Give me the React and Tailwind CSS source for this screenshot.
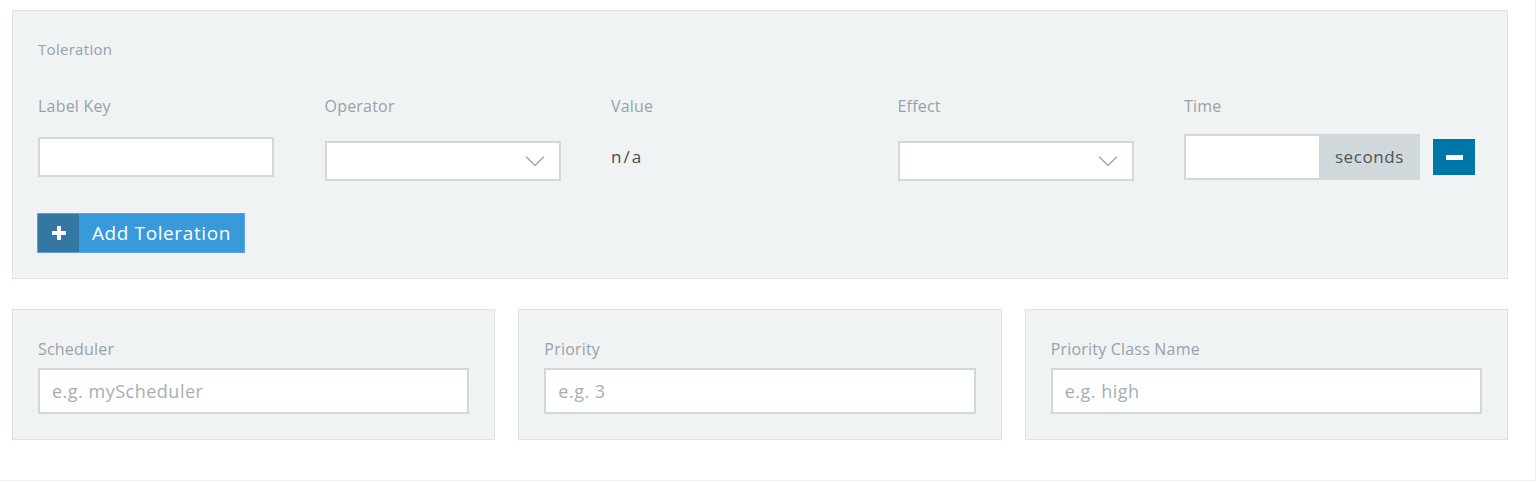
import React from 'react';

const font = { fontFamily: '"Open Sans", "Liberation Sans", sans-serif' };

const Chevron = () => (
  <svg width="20" height="11" viewBox="0 0 20 11" className="absolute right-[14px] top-1/2 -translate-y-1/2">
    <path d="M1 1 L10 10 L19 1" fill="none" stroke="#9ea7ac" strokeWidth="1.4" />
  </svg>
);

const SelectBox = () => (
  <div className="relative mt-[25px] h-[40px] w-[236px] bg-white border-2 border-[#d0d8db]">
    <Chevron />
  </div>
);

const Label = ({ children }) => (
  <div className="text-[16px] leading-[20px] tracking-[0.2px] text-[#98a1a7]">{children}</div>
);

const SmallPanel = ({ label, placeholder }) => (
  <div className="bg-[#f0f3f4] border border-[#dde3e6] h-[131px] px-[25px] pt-[29px]">
    <Label>{label}</Label>
    <input
      type="text"
      placeholder={placeholder}
      className="mt-[9px] w-full h-[46px] bg-white border-2 border-[#d0d8db] px-[12px] text-[18px] tracking-[0.5px] text-[#4a4a4a] placeholder:text-[#a6aeb3] outline-none"
      style={font}
    />
  </div>
);

export default function App() {
  return (
    <div className="w-[1536px] h-[481px] bg-white border-r border-b border-[#eff1f2] pt-[10px] pl-[12px] pr-[27px]" style={font}>
      {/* Toleration block */}
      <div className="bg-[#f0f3f4] border border-[#dde3e6] h-[269px] px-[25px] pt-[24px]">
        <div className="text-[15px] leading-[28px] tracking-[0.3px] text-[#98a1a7]">Toleration</div>

        <div className="mt-[33px] grid grid-cols-[236px_236px_236px_236px_auto] gap-x-[50.5px] items-start">
          <div className="flex flex-col">
            <Label>Label Key</Label>
            <input type="text" className="mt-[21px] h-[40px] w-[236px] bg-white border-2 border-[#d0d8db] outline-none" />
          </div>
          <div className="flex flex-col">
            <Label>Operator</Label>
            <SelectBox />
          </div>
          <div className="flex flex-col">
            <Label>Value</Label>
            <div className="mt-[29px] text-[17px] leading-[24px] tracking-[2px] text-[#4a4a4a]">n/a</div>
          </div>
          <div className="flex flex-col">
            <Label>Effect</Label>
            <SelectBox />
          </div>
          <div className="flex flex-col">
            <Label>Time</Label>
            <div className="flex items-start gap-[13px]">
              <div className="mt-[18px] flex h-[46px] w-[236px]">
                <input type="text" className="w-[135px] h-full bg-white border-2 border-r-0 border-[#d0d8db] outline-none" />
                <div className="flex-1 bg-[#d0d8db] flex items-center justify-center text-[17px] tracking-[0.6px] text-[#4f5457]">seconds</div>
              </div>
              <button className="mt-[23px] w-[42px] h-[36px] bg-[#0075a8] flex items-center justify-center">
                <span className="block w-[17px] h-[5px] bg-white" />
              </button>
            </div>
          </div>
        </div>

        <button className="mt-[32px] -ml-[1px] flex h-[40px] w-[208px] border border-[#5d9ee6] bg-[#3899db] text-white">
          <span className="w-[41px] h-full bg-[#3577a3] flex items-center justify-center">
            <svg width="16" height="16" viewBox="0 0 16 16">
              <path d="M8 1 V15 M1 8 H15" stroke="white" strokeWidth="4" />
            </svg>
          </span>
          <span className="pl-[13px] text-[19px] leading-[38px] tracking-[0.6px]">Add Toleration</span>
        </button>
      </div>

      {/* Scheduling fields */}
      <div className="mt-[30px] grid grid-cols-3 gap-x-[23px]">
        <SmallPanel label="Scheduler" placeholder="e.g. myScheduler" />
        <SmallPanel label="Priority" placeholder="e.g. 3" />
        <SmallPanel label="Priority Class Name" placeholder="e.g. high" />
      </div>
    </div>
  );
}
